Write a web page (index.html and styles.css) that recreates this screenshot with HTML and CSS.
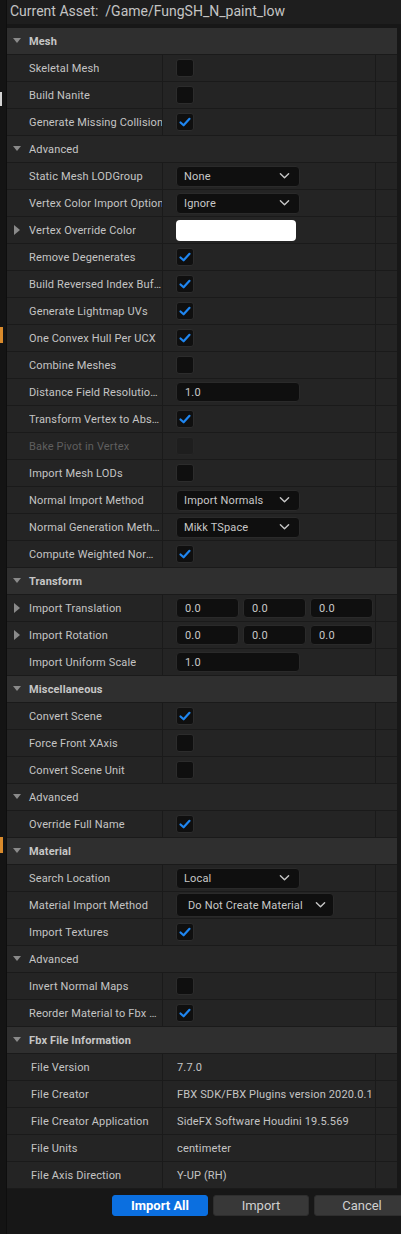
FILE: index.html
```html
<!DOCTYPE html>
<html>
<head>
<meta charset="utf-8">
<link rel="stylesheet" href="styles.css">
</head>
<body>
<div class="page">
  <div class="strip">
    <span class="mark mark-white"></span>
    <span class="mark mark-orange1"></span>
    <span class="mark mark-orange2"></span>
  </div>
  <div class="main">
    <div class="topbar">Current Asset:&nbsp; /Game/FungSH_N_paint_low</div>
    <div class="panel">
      <div class="cat"><span class="arrow down"></span>Mesh</div>
      <div class="row"><div class="name"><span class="lbl">Skeletal Mesh</span></div><div class="val"><span class="cb"></span></div><div class="rc"></div></div>
      <div class="row"><div class="name"><span class="lbl">Build Nanite</span></div><div class="val"><span class="cb"></span></div><div class="rc"></div></div>
      <div class="row"><div class="name"><span class="lbl clip">Generate Missing Collision</span></div><div class="val"><span class="cb on"><svg viewBox="0 0 18 18"><path d="M4.5 9.5 L7.6 12.3 L13.5 5.8"/></svg></span></div><div class="rc"></div></div>
      <div class="sub"><span class="arrow down"></span>Advanced</div>
      <div class="row"><div class="name"><span class="lbl">Static Mesh LODGroup</span></div><div class="val"><span class="dd">None<svg viewBox="0 0 12 8"><path d="M1.5 1.5 L6 6 L10.5 1.5"/></svg></span></div><div class="rc"></div></div>
      <div class="row"><div class="name"><span class="lbl clip">Vertex Color Import Option</span></div><div class="val"><span class="dd">Ignore<svg viewBox="0 0 12 8"><path d="M1.5 1.5 L6 6 L10.5 1.5"/></svg></span></div><div class="rc"></div></div>
      <div class="row"><div class="name"><span class="arrow right"></span><span class="lbl">Vertex Override Color</span></div><div class="val"><span class="swatch"></span></div><div class="rc"></div></div>
      <div class="row"><div class="name"><span class="lbl">Remove Degenerates</span></div><div class="val"><span class="cb on"><svg viewBox="0 0 18 18"><path d="M4.5 9.5 L7.6 12.3 L13.5 5.8"/></svg></span></div><div class="rc"></div></div>
      <div class="row"><div class="name"><span class="lbl">Build Reversed Index Buffer</span></div><div class="val"><span class="cb on"><svg viewBox="0 0 18 18"><path d="M4.5 9.5 L7.6 12.3 L13.5 5.8"/></svg></span></div><div class="rc"></div></div>
      <div class="row"><div class="name"><span class="lbl">Generate Lightmap UVs</span></div><div class="val"><span class="cb on"><svg viewBox="0 0 18 18"><path d="M4.5 9.5 L7.6 12.3 L13.5 5.8"/></svg></span></div><div class="rc"></div></div>
      <div class="row"><div class="name"><span class="lbl">One Convex Hull Per UCX</span></div><div class="val"><span class="cb on"><svg viewBox="0 0 18 18"><path d="M4.5 9.5 L7.6 12.3 L13.5 5.8"/></svg></span></div><div class="rc"></div></div>
      <div class="row"><div class="name"><span class="lbl">Combine Meshes</span></div><div class="val"><span class="cb"></span></div><div class="rc"></div></div>
      <div class="row"><div class="name"><span class="lbl">Distance Field Resolution Scale</span></div><div class="val"><span class="num">1.0</span></div><div class="rc"></div></div>
      <div class="row"><div class="name"><span class="lbl">Transform Vertex to Absolute</span></div><div class="val"><span class="cb on"><svg viewBox="0 0 18 18"><path d="M4.5 9.5 L7.6 12.3 L13.5 5.8"/></svg></span></div><div class="rc"></div></div>
      <div class="row"><div class="name dis"><span class="lbl">Bake Pivot in Vertex</span></div><div class="val"><span class="cb dis"></span></div><div class="rc"></div></div>
      <div class="row"><div class="name"><span class="lbl">Import Mesh LODs</span></div><div class="val"><span class="cb"></span></div><div class="rc"></div></div>
      <div class="row"><div class="name"><span class="lbl">Normal Import Method</span></div><div class="val"><span class="dd">Import Normals<svg viewBox="0 0 12 8"><path d="M1.5 1.5 L6 6 L10.5 1.5"/></svg></span></div><div class="rc"></div></div>
      <div class="row"><div class="name"><span class="lbl">Normal Generation Method</span></div><div class="val"><span class="dd">Mikk TSpace<svg viewBox="0 0 12 8"><path d="M1.5 1.5 L6 6 L10.5 1.5"/></svg></span></div><div class="rc"></div></div>
      <div class="row"><div class="name"><span class="lbl">Compute Weighted Normals</span></div><div class="val"><span class="cb on"><svg viewBox="0 0 18 18"><path d="M4.5 9.5 L7.6 12.3 L13.5 5.8"/></svg></span></div><div class="rc"></div></div>
      <div class="cat"><span class="arrow down"></span>Transform</div>
      <div class="row"><div class="name"><span class="arrow right"></span><span class="lbl">Import Translation</span></div><div class="val vec"><span class="num s">0.0</span><span class="num s">0.0</span><span class="num s">0.0</span></div><div class="rc"></div></div>
      <div class="row"><div class="name"><span class="arrow right"></span><span class="lbl">Import Rotation</span></div><div class="val vec"><span class="num s">0.0</span><span class="num s">0.0</span><span class="num s">0.0</span></div><div class="rc"></div></div>
      <div class="row"><div class="name"><span class="lbl">Import Uniform Scale</span></div><div class="val"><span class="num">1.0</span></div><div class="rc"></div></div>
      <div class="cat"><span class="arrow down"></span>Miscellaneous</div>
      <div class="row"><div class="name"><span class="lbl">Convert Scene</span></div><div class="val"><span class="cb on"><svg viewBox="0 0 18 18"><path d="M4.5 9.5 L7.6 12.3 L13.5 5.8"/></svg></span></div><div class="rc"></div></div>
      <div class="row"><div class="name"><span class="lbl">Force Front XAxis</span></div><div class="val"><span class="cb"></span></div><div class="rc"></div></div>
      <div class="row"><div class="name"><span class="lbl">Convert Scene Unit</span></div><div class="val"><span class="cb"></span></div><div class="rc"></div></div>
      <div class="sub"><span class="arrow down"></span>Advanced</div>
      <div class="row"><div class="name"><span class="lbl">Override Full Name</span></div><div class="val"><span class="cb on"><svg viewBox="0 0 18 18"><path d="M4.5 9.5 L7.6 12.3 L13.5 5.8"/></svg></span></div><div class="rc"></div></div>
      <div class="cat"><span class="arrow down"></span>Material</div>
      <div class="row"><div class="name"><span class="lbl">Search Location</span></div><div class="val"><span class="dd">Local<svg viewBox="0 0 12 8"><path d="M1.5 1.5 L6 6 L10.5 1.5"/></svg></span></div><div class="rc"></div></div>
      <div class="row"><div class="name"><span class="lbl">Material Import Method</span></div><div class="val"><span class="dd wide">Do Not Create Material<svg viewBox="0 0 12 8"><path d="M1.5 1.5 L6 6 L10.5 1.5"/></svg></span></div><div class="rc"></div></div>
      <div class="row"><div class="name"><span class="lbl">Import Textures</span></div><div class="val"><span class="cb on"><svg viewBox="0 0 18 18"><path d="M4.5 9.5 L7.6 12.3 L13.5 5.8"/></svg></span></div><div class="rc"></div></div>
      <div class="sub"><span class="arrow down"></span>Advanced</div>
      <div class="row"><div class="name"><span class="lbl">Invert Normal Maps</span></div><div class="val"><span class="cb"></span></div><div class="rc"></div></div>
      <div class="row"><div class="name"><span class="lbl">Reorder Material to Fbx Order</span></div><div class="val"><span class="cb on"><svg viewBox="0 0 18 18"><path d="M4.5 9.5 L7.6 12.3 L13.5 5.8"/></svg></span></div><div class="rc"></div></div>
      <div class="cat"><span class="arrow down"></span>Fbx File Information</div>
      <div class="row info"><div class="name"><span class="lbl">File Version</span></div><div class="val">7.7.0</div><div class="rc"></div></div>
      <div class="row info"><div class="name"><span class="lbl">File Creator</span></div><div class="val">FBX SDK/FBX Plugins version 2020.0.1</div><div class="rc"></div></div>
      <div class="row info"><div class="name"><span class="lbl">File Creator Application</span></div><div class="val">SideFX Software Houdini 19.5.569</div><div class="rc"></div></div>
      <div class="row info"><div class="name"><span class="lbl">File Units</span></div><div class="val">centimeter</div><div class="rc"></div></div>
      <div class="row info"><div class="name"><span class="lbl">File Axis Direction</span></div><div class="val">Y-UP (RH)</div><div class="rc"></div></div>
    </div>
    <div class="buttons">
      <button class="btn primary">Import All</button>
      <button class="btn">Import</button>
      <button class="btn">Cancel</button>
    </div>
  </div>
</div>
</body>
</html>
```
FILE: styles.css
```css
* { box-sizing: border-box; }
html, body {
  margin: 0;
  padding: 0;
  background: #171717;
  width: 401px;
  height: 1234px;
  overflow: hidden;
  font-family: Roboto, "Liberation Sans", sans-serif;
}
.page {
  display: flex;
  height: 1234px;
}
.strip {
  position: relative;
  width: 7px;
  flex: none;
  background: #141414;
  border-right: 1px solid #0e0e0e;
}
.mark {
  position: absolute;
  left: 0;
  width: 3px;
}
.mark-white { top: 92px; height: 14px; width: 2px; background: #d4d4d4; }
.mark-orange1 { top: 327px; height: 16px; background: #d98a2b; }
.mark-orange2 { top: 837px; height: 16px; background: #d98a2b; }
.main {
  flex: 1;
  display: flex;
  flex-direction: column;
  min-width: 0;
}
.topbar {
  height: 24px;
  margin-left: -7px;
  padding-left: 10px;
  background: #1e1e1e;
  color: #c4c4c4;
  font-size: 14px;
  line-height: 23px;
  white-space: nowrap;
}
.panel {
  margin-top: 4px;
  width: 390px;
  display: flex;
  flex-direction: column;
  gap: 1px;
  background: #1a1a1a;
  padding-bottom: 1px;
}
.cat, .sub {
  height: 26px;
  display: flex;
  align-items: center;
  padding-left: 22px;
  position: relative;
  font-size: 11px;
  letter-spacing: 0.15px;
  color: #c6c6c6;
}
.cat {
  background: #2f2f2f;
  font-weight: bold;
}
.sub {
  background: #262626;
}
.arrow {
  position: absolute;
  left: 6px;
  width: 0;
  height: 0;
}
.arrow.down {
  left: 6px;
  top: 10px;
  border-left: 4.5px solid transparent;
  border-right: 4.5px solid transparent;
  border-top: 5px solid #8a8a8a;
}
.arrow.right {
  left: 7px;
  top: 8px;
  border-top: 5px solid transparent;
  border-bottom: 5px solid transparent;
  border-left: 6px solid #8a8a8a;
}
.row {
  height: 26px;
  display: grid;
  grid-template-columns: 155px 212px 21px;
  column-gap: 1px;
  background: #1a1a1a;
}
.row > div {
  background: #242424;
  display: flex;
  align-items: center;
  min-width: 0;
}
.name {
  position: relative;
  padding-left: 22px;
  font-size: 11px;
  letter-spacing: 0.15px;
  color: #c4c4c4;
  white-space: nowrap;
  overflow: hidden;
}
.lbl {
  display: block;
  max-width: 133px;
  overflow: hidden;
  text-overflow: ellipsis;
  white-space: nowrap;
}
.lbl.clip {
  max-width: none;
  overflow: visible;
}
.name.dis { color: #5f5f5f; }
.val {
  padding-left: 13px;
  font-size: 11px;
  letter-spacing: 0.15px;
  color: #c4c4c4;
  white-space: nowrap;
  overflow: hidden;
}
.info .name { padding-left: 24px; }
.info .val { padding-left: 14px; }
.cb {
  width: 18px;
  height: 18px;
  border-radius: 3px;
  background: #0f0f0f;
  border: 1px solid #2c2c2c;
  display: flex;
  align-items: center;
  justify-content: center;
}
.cb svg { width: 18px; height: 18px; flex: none; }
.cb svg path {
  fill: none;
  stroke: #1f86f0;
  stroke-width: 2.2;
  stroke-linecap: round;
  stroke-linejoin: round;
}
.cb.dis { background: #1e1e1e; border-color: #262626; }
.dd {
  width: 124px;
  height: 21px;
  border-radius: 4px;
  background: #0f0f0f;
  border: 1px solid #2a2a2a;
  display: flex;
  align-items: center;
  justify-content: space-between;
  padding: 0 9px 0 7px;
  font-size: 11px;
  color: #c8c8c8;
}
.dd.wide { width: 158px; height: 24px; padding-left: 11px; padding-right: 7px; }
.dd svg { width: 11px; height: 8px; flex: none; }
.dd svg path {
  fill: none;
  stroke: #c8c8c8;
  stroke-width: 1.5;
  stroke-linecap: round;
  stroke-linejoin: round;
}
.swatch {
  width: 120px;
  height: 21px;
  border-radius: 4px;
  background: #ffffff;
}
.num {
  width: 124px;
  height: 20px;
  border-radius: 4px;
  background: #0f0f0f;
  border: 1px solid #2a2a2a;
  display: flex;
  align-items: center;
  padding-left: 8px;
  font-size: 11px;
  color: #c8c8c8;
}
.vec { gap: 4px; }
.num.s { width: 63px; flex: none; }
.buttons {
  display: flex;
  gap: 5px;
  padding-left: 105px;
  margin-top: 6px;
}
.btn {
  flex: none;
  width: 96px;
  height: 21px;
  border-radius: 3px;
  border: 1px solid #2e2e2e;
  background: #383838;
  color: #d0d0d0;
  font-family: Roboto, "Liberation Sans", sans-serif;
  font-size: 13px;
  padding: 0;
  line-height: 19px;
}
.btn.primary {
  background: #0b6fe0;
  border-color: #0b6fe0;
  color: #ffffff;
  font-weight: bold;
}
```
